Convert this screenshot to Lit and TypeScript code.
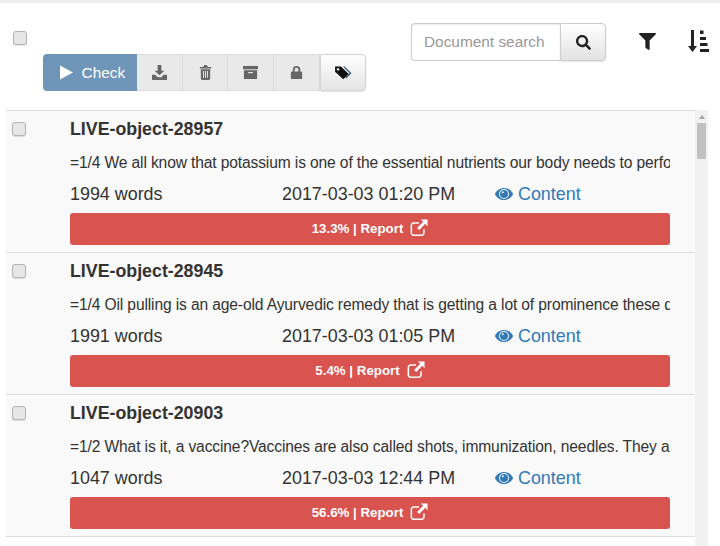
import { LitElement, html, css, svg } from "lit";
import { customElement } from "lit/decorators.js";

const rows = [
  { t: "LIVE-object-28957", x: "=1/4 We all know that potassium is one of the essential nutrients our body needs to perform well every day", w: "1994 words", d: "2017-03-03 01:20 PM", p: "13.3%" },
  { t: "LIVE-object-28945", x: "=1/4 Oil pulling is an age-old Ayurvedic remedy that is getting a lot of prominence these days among people", w: "1991 words", d: "2017-03-03 01:05 PM", p: "5.4%" },
  { t: "LIVE-object-20903", x: "=1/2 What is it, a vaccine?Vaccines are also called shots, immunization, needles. They are given to protect", w: "1047 words", d: "2017-03-03 12:44 PM", p: "56.6%" },
];

const icon = (vb: string, cls: string, body: unknown) =>
  html`<svg class=${cls} viewBox=${vb} fill="currentColor" aria-hidden="true">${body}</svg>`;

const external = icon("0 0 20 20", "ext", svg`
  <path d="M15.5 11.5v4a2.5 2.5 0 0 1-2.5 2.5H4a2.5 2.5 0 0 1-2.5-2.5V7A2.5 2.5 0 0 1 4 4.5h6" fill="none" stroke="currentColor" stroke-width="1.7"/>
  <path d="M12 0.5h7.5V8l-2.6-2.6-6.6 6.9-2.4-2.4 6.8-6.8z"/>`);

const eye = icon("0 0 576 512", "eye", svg`<path d="M572.52 241.4C518.29 135.59 410.93 64 288 64S57.68 135.64 3.48 241.41a32.35 32.35 0 0 0 0 29.19C57.71 376.41 165.07 448 288 448s230.32-71.64 284.52-177.41a32.35 32.35 0 0 0 0-29.19zM288 416a160 160 0 1 1 160-160 160 160 0 0 1-160 160z"/><path d="M288 128a128 128 0 1 0 128 128 128 128 0 0 0-128-128zm-40 40a32 32 0 1 1-32 32 32 32 0 0 1 32-32z"/>`);

@customElement("app-root")
export class AppRoot extends LitElement {
  static styles = css`
    :host { display: block; width: 720px; height: 546px; overflow: hidden; background: #fff;
      font-family: "Liberation Sans", Arial, sans-serif; color: #333; border-top: 3px solid #eee; box-sizing: border-box; }
    .head { display: flex; height: 107px; box-sizing: border-box; }
    .left { width: 411px; flex: none; padding: 28px 0 0 13px; box-sizing: border-box; }
    .cb { appearance: none; display: block; width: 14px; height: 14px; margin: 0; box-sizing: border-box;
      background: #e6e6e6; border: 1px solid #b4b4b4; border-radius: 3px; box-shadow: 0 1px 1px rgba(0,0,0,.12); }
    .toolbar { display: flex; margin: 9px 0 0 30px; width: 323px; height: 37px; }
    .tb { display: flex; align-items: center; justify-content: center; width: 46px; box-sizing: border-box;
      background: #e9e9e9; border: 1px solid #ddd; border-left: 0; color: #666; }
    .check { width: 94px; background: #6f96b8; border: 0; border-radius: 4px 0 0 4px; color: #fff;
      font-size: 15.4px; gap: 8px; padding-left: 4px; }
    .check svg { width: 13px; height: 14px; }
    .tb svg { width: 15px; height: 15px; }
    .tb.last { background: linear-gradient(#fff, #e4e4e4); color: #111; border: 1px solid #d4d4d4; border-radius: 0 4px 4px 0;
      box-shadow: 0 1px 2px rgba(0,0,0,.12); }
    .tb.last svg { width: 17px; height: 15px; }
    .right { display: flex; align-items: flex-start; padding-top: 20px; }
    .search { display: flex; height: 38px; }
    .input { width: 149px; box-sizing: border-box; border: 1px solid #ccc; border-right: 0; border-radius: 4px 0 0 4px;
      padding: 0 0 0 12px; font-size: 15.4px; line-height: 36px; color: #999; box-shadow: inset 0 1px 1px rgba(0,0,0,.075); }
    .sbtn { width: 46px; box-sizing: border-box; display: flex; align-items: center; justify-content: center; color: #222;
      background: linear-gradient(#fff, #e2e2e2); border: 1px solid #ccc; border-radius: 0 4px 4px 0; box-shadow: 0 1px 2px rgba(0,0,0,.1); }
    .sbtn svg { width: 15px; height: 15px; }
    .filter { width: 17px; height: 17px; margin: 10px 0 0 33px; color: #222; }
    .sort { width: 21px; height: 22px; margin: 7px 0 0 32px; color: #222; }
    .body { display: flex; height: 436px; padding-left: 6px; }
    .list { width: 689px; flex: none; border-top: 1px solid #ddd; box-sizing: border-box; }
    .row { display: grid; grid-template-columns: 64px 600px; height: 142px; box-sizing: border-box; background: #f9f9f9;
      border-bottom: 1px solid #ddd; }
    .row .cb { margin: 11px 0 0 6px; }
    .main { min-width: 0; padding-top: 7px; }
    .title { font-size: 17.8px; font-weight: 700; line-height: 22px; color: #333; }
    .text { font-size: 15.6px; letter-spacing: -0.13px; line-height: 22px; margin-top: 12px; white-space: nowrap; overflow: hidden; color: #333; }
    .meta { display: grid; grid-template-columns: 212px 213px 1fr; font-size: 17.9px; line-height: 22px; margin-top: 9px; }
    .link { display: flex; align-items: center; gap: 5px; color: #337ab7; }
    .eye { width: 18px; height: 16px; }
    .bar { display: flex; align-items: center; justify-content: center; gap: 7px; height: 32px; margin-top: 8px; background: #d9534f;
      border-radius: 3px; color: #fff; font-size: 13.3px; font-weight: 700; }
    .bar span { margin-top: -2px; }
    .ext { width: 18px; height: 18px; margin-top: -2px; }
    .scroll { width: 13px; flex: none; background: #f1f1f1; display: flex; flex-direction: column; align-items: center; }
    .up { width: 0; height: 0; margin-top: 5px; border: 3px solid transparent; border-top: 0; border-bottom: 4px solid #a3a3a3; }
    .thumb { width: 9px; height: 36px; margin-top: 4px; background: #c1c1c1; }
  `;

  render() {
    return html`
      <div class="head">
        <div class="left">
          <input class="cb" type="checkbox" />
          <div class="toolbar">
            <div class="tb check">
              ${icon("0 0 14 15", "", svg`<path d="M0.5 0.5 13.5 7.5 0.5 14.5z"/>`)}
              <span>Check</span>
            </div>
            <div class="tb">${icon("0 0 16 16", "", svg`<path d="M6 0h4v6h3.2L8 11 2.8 6H6z"/><path d="M0 10.5h3.6L6 13h4l2.4-2.5H16V16H0z"/>`)}</div>
            <div class="tb">${icon("0 0 16 16", "", svg`<path d="M5.5 2 6.6 0h2.8l1.1 2H14v1.6H2V2z"/><path fill-rule="evenodd" d="M3 4.5h10V14.5a1.5 1.5 0 0 1-1.5 1.5h-7A1.5 1.5 0 0 1 3 14.5zM5.4 6.5v7h1v-7zM7.5 6.5v7h1v-7zM9.6 6.5v7h1v-7z"/>`)}</div>
            <div class="tb">${icon("0 0 16 16", "", svg`<path d="M0 1h16v3.6H0z"/><path fill-rule="evenodd" d="M1 5.6h14V15H1zM5.5 7.4v1.4h5V7.4z"/>`)}</div>
            <div class="tb">${icon("0 0 16 16", "", svg`<path fill-rule="evenodd" d="M4 7V5a4 4 0 0 1 8 0v2h1a1 1 0 0 1 1 1v6a1 1 0 0 1-1 1H3a1 1 0 0 1-1-1V8a1 1 0 0 1 1-1zm2 0h4V5a2 2 0 0 0-4 0z"/>`)}</div>
            <div class="tb last">${icon("0 0 18 16", "", svg`<path d="M8.5 1.5h1.6l7.4 7.2-5.7 5.8-1-1 4.7-4.8z" fill="#24527a"/><path fill-rule="evenodd" d="M0 1.5h6.3l8.2 8-5.8 5.8L0 7.2zM3.2 3.2a1.4 1.4 0 1 0 .01 0z"/>`)}</div>
          </div>
        </div>
        <div class="right">
          <div class="search">
            <div class="input">Document search</div>
            <div class="sbtn">${icon("0 0 512 512", "", svg`<path d="M505 442.7L405.3 343c-4.5-4.5-10.6-7-17-7H372c27.6-35.3 44-79.7 44-128C416 93.1 322.9 0 208 0S0 93.1 0 208s93.1 208 208 208c48.3 0 92.7-16.4 128-44v16.3c0 6.4 2.5 12.5 7 17l99.7 99.7c9.4 9.4 24.6 9.4 33.9 0l28.3-28.3c9.4-9.4 9.4-24.6.1-34zM208 336c-70.7 0-128-57.2-128-128 0-70.7 57.2-128 128-128 70.7 0 128 57.2 128 128 0 70.7-57.2 128-128 128z"/>`)}</div>
          </div>
          ${icon("0 0 512 512", "filter", svg`<path d="M487.976 0H24.028C2.71 0-8.047 25.866 7.058 40.971L192 225.941V432c0 7.831 3.821 15.17 10.237 19.662l80 55.98C298.02 518.69 320 507.493 320 487.98V225.941l184.947-184.97C520.021 25.896 509.338 0 487.976 0z"/>`)}
          ${icon("0 0 21 22", "sort", svg`<path d="M3 0h3v16h3l-4.5 6L0 16h3z"/><path d="M12 0.5h3.5v3.5H12z"/><path d="M12 7h6v3h-6z"/><path d="M12 13h7.5v3H12z"/><path d="M12 19h9v3h-9z"/>`)}
        </div>
      </div>
      <div class="body">
        <div class="list">
          ${rows.map(r => html`
            <div class="row">
              <input class="cb" type="checkbox" />
              <div class="main">
                <div class="title">${r.t}</div>
                <div class="text">${r.x}</div>
                <div class="meta">
                  <span>${r.w}</span>
                  <span>${r.d}</span>
                  <span class="link">${eye}Content</span>
                </div>
                <div class="bar"><span>${r.p} | Report</span>${external}</div>
              </div>
            </div>`)}
        </div>
        <div class="scroll"><div class="up"></div><div class="thumb"></div></div>
      </div>
    `;
  }
}
